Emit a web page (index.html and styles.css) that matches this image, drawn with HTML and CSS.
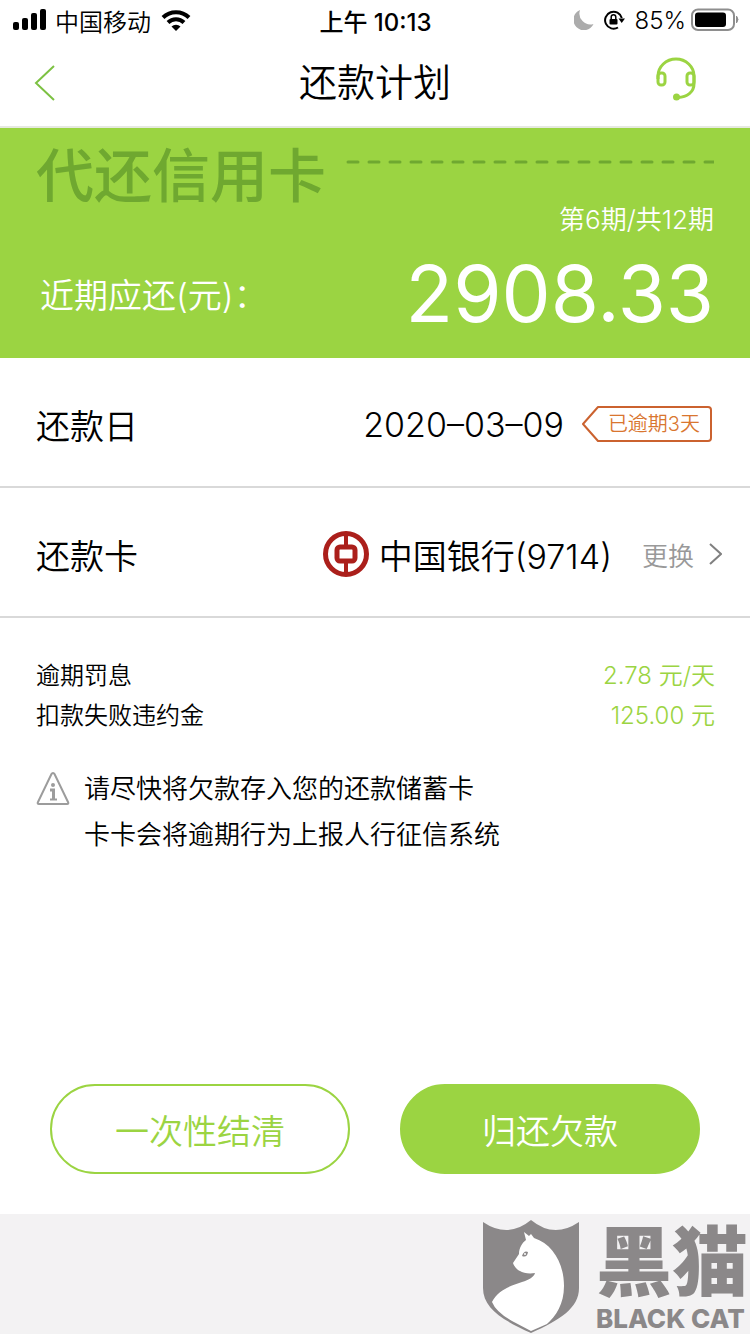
FILE: index.html
```html
<!DOCTYPE html>
<html lang="zh-CN">
    <head>
        <meta charset="utf-8">
        <meta name="viewport" content="width=device-width">
        <title>还款计划</title>
        <link rel="stylesheet" href="styles.css">
    </head>
    <body>
        <div class="status">
            <div class="status-left">
                <svg width="34" height="24" viewBox="0 0 34 24">
                    <rect x="1" y="14" width="6" height="8" rx="2"/>
                    <rect x="10" y="10" width="6" height="12" rx="2"/>
                    <rect x="19" y="5" width="6" height="17" rx="2"/>
                    <rect x="28" y="1" width="6" height="21" rx="2"/>
                </svg>
                <span>中国移动</span>
                <svg width="32" height="24" viewBox="0 0 30 24">
                    <path d="M2 9.500a18.500 18.500 0 0 1 26 0" fill="none" stroke="#000" stroke-width="4"/>
                    <path d="M7 14.500a11.500 11.500 0 0 1 16 0" fill="none" stroke="#000" stroke-width="4"/>
                    <path d="M15 23l-4.500-4.500a6.500 6.500 0 0 1 9 0z"/>
                </svg>
            </div>
            <div class="status-time">上午 10:13</div>
            <div class="status-right">
                <svg width="20" height="20" viewBox="0 0 20 20"><path d="M6 0A10.500 10.500 0 1 0 19.500 14A11 11 0 0 1 6 0z" fill="#acacac"/></svg>
                <svg class="lock" width="21" height="20" viewBox="0 0 21 20">
                    <path d="M14 17.500A8.500 8.500 0 1 1 17.800 8" fill="none" stroke="#000" stroke-width="2"/>
                    <path d="M14.500 8.500h6.500l-3.300 4.500z"/>
                    <rect x="5.500" y="9" width="8" height="5.500" rx="1"/>
                    <path d="M7.200 9V7a2.300 2.300 0 0 1 4.600 0v2" fill="none" stroke="#000" stroke-width="1.500"/>
                </svg>
                <span>85%</span>
                <svg width="48" height="24" viewBox="0 0 48 24">
                    <rect x="1" y="1.500" width="42" height="20.500" rx="6" fill="none" stroke="#8e8e8e" stroke-width="2"/>
                    <rect x="4" y="4.500" width="31" height="14.500" rx="3"/>
                    <path d="M45.500 8v7q3-3.500 0-7z" fill="#8e8e8e" stroke="#8e8e8e"/>
                </svg>
            </div>
        </div>

        <header class="header">
            <a href="#" class="back" aria-label="返回">
                <svg width="22" height="38" viewBox="0 0 22 38"><path d="M20 2L2 19l18 17" fill="none" stroke="#7cc142" stroke-width="2"/></svg>
            </a>
            <h1>还款计划</h1>
            <a href="#" class="service" aria-label="客服">
                <svg width="40" height="44" viewBox="0 0 40 44" fill="none" stroke="#9bd442" stroke-width="3">
                    <path d="M2 22V19a18 17 0 0 1 36 0v8c0 8-7 13-16 13.500"/>
                    <rect x="2" y="16" width="7" height="12" rx="3" stroke-width="3"/>
                    <rect x="31" y="16" width="7" height="12" rx="3" stroke-width="3"/>
                    <circle cx="20.500" cy="40" r="3.500" fill="#9bd442" stroke="none"/>
                </svg>
            </a>
        </header>

        <section class="hero">
            <div class="hero-name">
                <span>代还信用卡</span>
                <svg class="dash" height="4"><line x1="2" y1="2" x2="100%" y2="2"/></svg>
            </div>
            <p class="period">第6期/共12期</p>
            <div class="due">
                <span>近期应还(元)：</span>
                <span class="amount">2908.33</span>
            </div>
        </section>

        <div class="row">
            <span class="label">还款日</span>
            <span>2020–03–09</span>
            <span class="tag">
                <svg width="130" height="36" viewBox="0 0 130 36"><path d="M16 1h110q3 0 3 3v28q0 3-3 3H16L1 18z" fill="none" stroke="#cb622f" stroke-width="2" stroke-linejoin="round"/></svg>
                <span class="tag-text">已逾期3天</span>
            </span>
        </div>
        <div class="row">
            <span class="label">还款卡</span>
            <svg class="bank" width="46" height="46" viewBox="0 0 46 46" fill="none" stroke="#ab1f1b">
                <circle cx="23" cy="23" r="20.500" stroke-width="5"/>
                <rect x="14" y="16" width="18" height="14" rx="3" stroke-width="5"/>
                <path d="M23 3v13M23 30v13" stroke-width="4"/>
            </svg>
            <span>中国银行(9714)</span>
            <a href="#" class="change">更换
                <svg width="13" height="22" viewBox="0 0 13 22"><path d="M1 1l11 10L1 21" fill="none" stroke="#808080" stroke-width="2"/></svg>
            </a>
        </div>

        <dl class="fees">
            <div><dt>逾期罚息</dt><dd>2.78 元/天</dd></div>
            <div><dt>扣款失败违约金</dt><dd>125.00 元</dd></div>
        </dl>

        <div class="notice">
            <svg width="34" height="34" viewBox="0 0 34 34" fill="none" stroke="#9c9c9c" stroke-width="2">
                <path d="M17 2q1 0 1.500 1L32 31q1 2-1 2H3q-2 0-1-2L15.500 3q.5-1 1.500-1z"/>
                <circle cx="17" cy="14" r="2" fill="#9c9c9c" stroke="none"/>
                <path d="M14 19h3.500v9" stroke-width="3"/>
                <path d="M14 28.500h7"/>
            </svg>
            <p>请尽快将欠款存入您的还款储蓄卡<br>卡卡会将逾期行为上报人行征信系统</p>
        </div>

        <div class="actions">
            <button type="button" class="btn">一次性结清</button>
            <button type="button" class="btn btn-fill">归还欠款</button>
        </div>

        <footer class="footer">
            <svg width="98" height="115" viewBox="0 0 98 115">
                <path d="M1 3Q26 20 49 1q23 19 48 2v66c0 20-19 32-48 45C20 101 1 89 1 69z" fill="#8b8889"/>
                <path d="M42 13l5 4 2-2 3 4c19 6 30 26 30 48 0 18-8 30-17 38L49 112 30 102Q14 93 10 83c6-12 18-16 30-20 7-2 12-5 13-9-6 1-12 0-15-2-3-1-6-5-7-8l6-9c0-6 3-11 7-14z" fill="#fff"/>
                <path d="M40 37q2-6 6-4-1 6-6 4z" fill="#8b8889"/>
                <circle cx="43" cy="35" r="1" fill="#fff"/>
            </svg>
            <div class="brand">
                <span class="brand-cn">黑猫</span>
                <span class="brand-en">BLACK CAT</span>
            </div>
        </footer>
    </body>
</html>
```
FILE: styles.css
```css
* {
    box-sizing: border-box;
}
body {
    display: flex;
    flex-direction: column;
    min-height: 100vh;
    margin: 0;
    background: #fff;
    color: #000;
    font-family: Inter, "Noto Sans CJK SC", sans-serif;
    font-size: 34px;
    font-weight: 350;
}
h1, p, dl, dd {
    margin: 0;
}
a {
    color: inherit;
    text-decoration: none;
}
svg {
    display: block;
    flex: none;
}

/* status bar */
.status {
    display: grid;
    grid-template-columns: 1fr auto 1fr;
    align-items: center;
    height: 40px;
    padding: 0 11px 0 12px;
    font-size: 24px;
}
.status-left, .status-right {
    display: flex;
    align-items: center;
    gap: 9px;
}
.status-right {
    justify-content: flex-end;
    gap: 5px;
}
.status-time {
    font-weight: 500;
}
.lock {
    margin: 0 5px;
}

/* title bar */
.header {
    display: grid;
    grid-template-columns: 1fr auto 1fr;
    align-items: center;
    height: 88px;
    padding: 0 34px 8px;
    border-bottom: 2px solid #e6e9e0;
}
.header h1 {
    font-size: 38px;
    font-weight: 350;
}
.back {
    justify-self: start;
    padding-top: 8px;
}
.service {
    justify-self: end;
    margin-right: 20px;
}

.hero {
    height: 230px;
    padding: 16px 36px 0;
    background: #9bd442;
    color: #fff;
}
.hero-name {
    display: flex;
    gap: 20px;
    height: 60px;
    color: #6fa830;
    font-size: 58px;
    font-weight: 500;
    line-height: 64px;
}
.dash {
    flex: 1;
    min-width: 0;
    margin-top: 16px;
    stroke: #6fa830;
    stroke-width: 3;
    stroke-linecap: round;
    stroke-dasharray: 10 11;
}
.period {
    font-size: 26px;
    line-height: 32px;
    text-align: right;
}
.due {
    display: flex;
    justify-content: space-between;
    align-items: center;
    height: 114px;
    padding-left: 4px;
}
.amount {
    font-size: 78px;
    font-weight: 400;
}

.row {
    display: flex;
    align-items: center;
    height: 130px;
    padding: 4px 28px 0 36px;
    border-bottom: 2px solid #d9d9d9;
}
.label {
    flex: 1;
}
.tag {
    position: relative;
    margin: 0 10px 0 18px;
    color: #d9762f;
    font-size: 20px;
}
.tag-text {
    position: absolute;
    inset: 0 12px 0 auto;
    line-height: 36px;
}
.bank {
    margin-right: 10px;
}
.change {
    display: flex;
    align-items: center;
    gap: 15px;
    margin-left: 30px;
    color: #999;
    font-size: 26px;
}

.fees {
    padding: 38px 35px 0 36px;
    font-size: 24px;
    line-height: 40px;
}
.fees div {
    display: flex;
    justify-content: space-between;
}
.fees dd {
    color: #9bd442;
}
.notice {
    display: flex;
    gap: 14px;
    padding: 30px 36px;
    font-size: 26px;
    line-height: 46px;
}
.notice svg {
    margin-top: 5px;
}

.actions {
    display: flex;
    gap: 50px;
    margin-top: auto;
    padding: 0 50px 40px;
}
.btn {
    flex: 1;
    height: 90px;
    border: 2px solid #9bd442;
    border-radius: 45px;
    background: #fff;
    color: #9bd442;
    font: inherit;
}
.btn-fill {
    background: #9bd442;
    color: #fff;
}

.footer {
    display: flex;
    justify-content: flex-end;
    gap: 16px;
    height: 120px;
    padding: 5px 2px 0 0;
    background: #f3f2f3;
    color: #8b8889;
}
.brand {
    display: flex;
    flex-direction: column;
    font-weight: 900;
}
.brand-cn {
    font-size: 76px;
    line-height: 86px;
}
.brand-en {
    font-size: 26px;
    font-weight: 800;
    line-height: 28px;
}
```
